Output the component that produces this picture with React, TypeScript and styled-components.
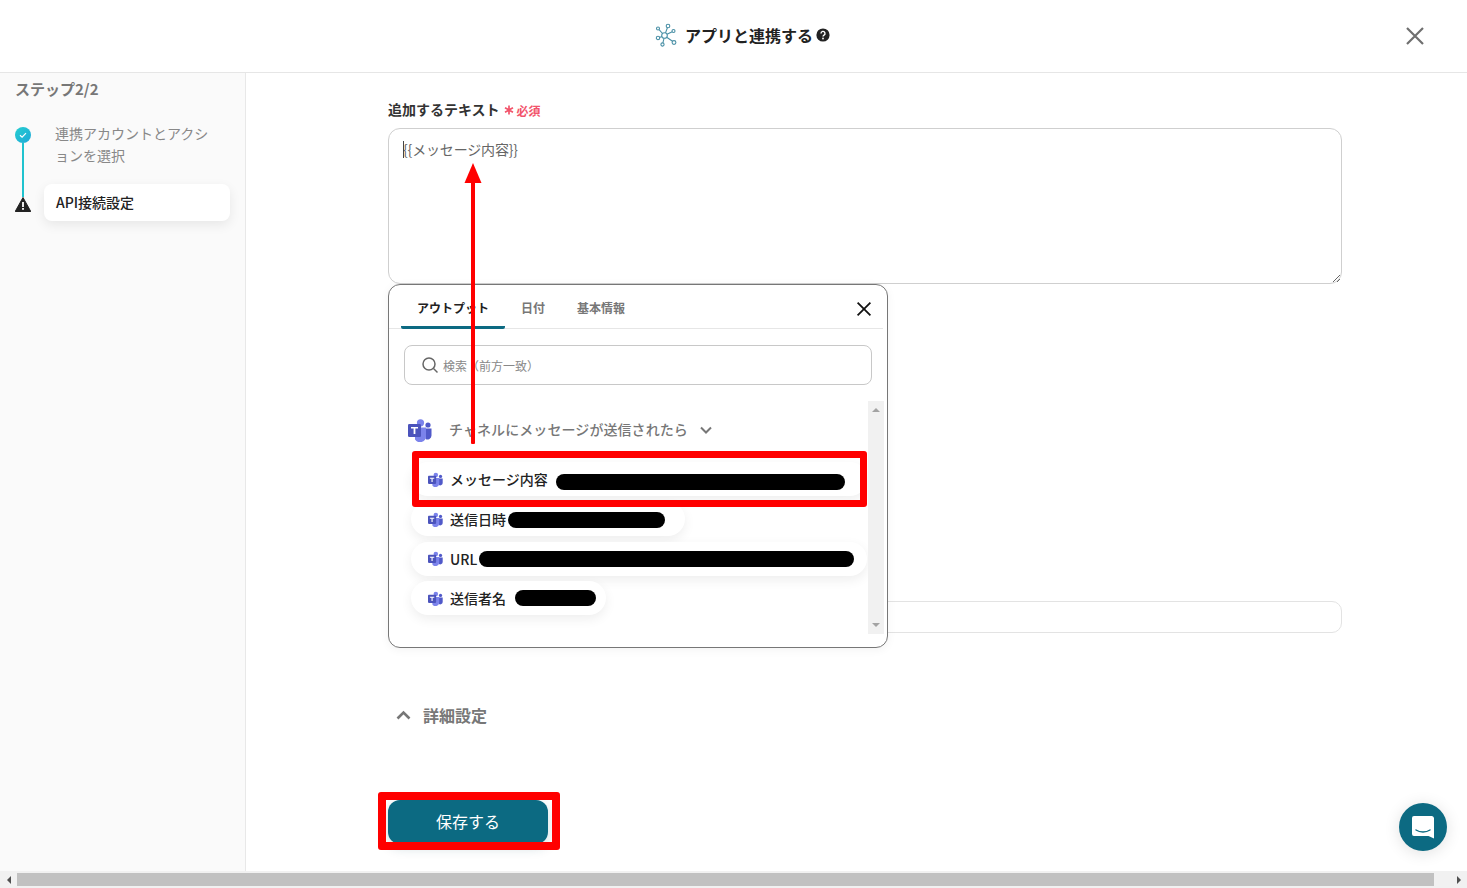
import React from "react";
import styled, { createGlobalStyle } from "styled-components";

const Global = createGlobalStyle`
  html, body { margin: 0; padding: 0; height: 100%; overflow: hidden; background: #fff; }
  body { font-family: "Noto Sans CJK JP", "Noto Sans", sans-serif; color: #222; }
  * { box-sizing: border-box; }
`;

const Page = styled.div`
  position: relative;
  width: 1467px;
  height: 888px;
  display: flex;
  flex-direction: column;
  overflow: hidden;
`;
const Header = styled.header`
  height: 73px;
  flex: none;
  display: grid;
  grid-template-columns: 1fr auto 1fr;
  align-items: center;
  border-bottom: 1px solid #e6e6e6;
  padding: 0 42px 0 60px;
`;
const Title = styled.h1`
  grid-column: 2;
  margin: -2px 0 0;
  display: flex;
  align-items: center;
  font-size: 16px;
  line-height: 24px;
  font-weight: 700;
  color: #222;
`;
const TitleText = styled.span`
  margin-left: 8px;
  margin-right: 3px;
`;
const CloseBtn = styled.div`
  grid-column: 3;
  justify-self: end;
  width: 20px;
  height: 20px;
  display: flex;
`;
const Body = styled.div`
  flex: 1;
  display: flex;
  min-height: 0;
`;
const Sidebar = styled.aside`
  width: 246px;
  flex: none;
  background: #fafafa;
  border-right: 1px solid #e8e8e8;
  padding: 6px 15px 0;
`;
const StepHead = styled.div`
  font-size: 15px;
  line-height: 20px;
  font-weight: 700;
  color: #777;
  letter-spacing: 0;
`;
const Steps = styled.div`
  display: flex;
  margin-top: 28px;
`;
const Rail = styled.div`
  width: 16px;
  flex: none;
  display: flex;
  flex-direction: column;
  align-items: center;
`;
const RailLine = styled.div`
  width: 2px;
  height: 54px;
  background: #1fc3cf;
`;
const StepList = styled.div`
  margin-left: 13px;
  width: 186px;
  display: flex;
  flex-direction: column;
  margin-top: -5px;
`;
const StepItem = styled.div<{ $active?: boolean }>`
  padding: ${(p) => (p.$active ? "7px 12px" : "0 12px 0 11px")};
  height: ${(p) => (p.$active ? "37px" : "auto")};
  margin-top: ${(p) => (p.$active ? "18px" : "0")};
  font-size: 14px;
  line-height: 22px;
  font-weight: ${(p) => (p.$active ? 500 : 400)};
  color: ${(p) => (p.$active ? "#222" : "#888")};
  background: ${(p) => (p.$active ? "#fff" : "transparent")};
  border-radius: ${(p) => (p.$active ? "8px" : "0")};
  box-shadow: ${(p) => (p.$active ? "0 4px 12px rgba(0,0,0,.08)" : "none")};
`;
const Main = styled.main`
  flex: 1;
  padding: 25px 0 0 142px;
  min-width: 0;
`;
const Column = styled.div`
  width: 954px;
  display: flex;
  flex-direction: column;
`;
const LabelRow = styled.div`
  display: flex;
  align-items: center;
  height: 22px;
  font-size: 14px;
  font-weight: 700;
  color: #333;
`;
const Required = styled.span`
  display: flex;
  align-items: center;
  margin-left: 4px;
  font-size: 12px;
  font-weight: 700;
  color: #f2546b;
  margin-top: 2px;
`;
const Asterisk = styled.span`
  width: 10px;
  height: 12px;
  margin-right: 3px;
  display: flex;
`;
const AreaWrap = styled.div`
  position: relative;
  margin-top: 8px;
  height: 156px;
`;
const TextArea = styled.textarea`
  display: block;
  width: 100%;
  height: 156px;
  resize: vertical;
  border: 1px solid #cfcfcf;
  border-radius: 12px;
  padding: 10px 14px;
  font-family: "Noto Sans CJK JP", sans-serif;
  font-size: 14px;
  line-height: 20px;
  letter-spacing: -0.16px;
  color: #666;
  background: #fff;
  outline: none;
`;
const Caret = styled.span`
  position: absolute;
  left: 15px;
  top: 13px;
  width: 1px;
  height: 17px;
  background: #444;
`;
const TextInput = styled.div`
  margin-top: 317px;
  height: 32px;
  border: 1px solid #e3e3e3;
  border-radius: 10px;
  background: #fff;
`;
const Details = styled.div`
  margin-top: 70px;
  height: 24px;
  padding-left: 8px;
  display: flex;
  align-items: center;
  gap: 12px;
  font-size: 16px;
  font-weight: 700;
  color: #777;
`;
const SaveBtn = styled.button`
  margin-top: 73px;
  width: 160px;
  height: 44px;
  padding: 0 0 2px;
  border: none;
  border-radius: 12px;
  background: #0c6a82;
  color: #fff;
  font-family: "Noto Sans CJK JP", sans-serif;
  font-size: 16px;
  box-shadow: 0 4px 12px rgba(12,70,90,.18);
`;
const HScroll = styled.div`
  height: 17px;
  flex: none;
  background: #f1f1f1;
  display: grid;
  grid-template-columns: 17px 1fr 33px;
  align-items: center;
`;
const HThumb = styled.div`
  height: 13px;
  background: #c1c1c1;
`;
const ArrowBox = styled.div<{ $pad?: number }>`
  display: flex;
  justify-content: center;
  align-items: center;
  padding-left: ${(p) => p.$pad || 0}px;
`;
const Tri = styled.span<{ $dir: "l" | "r" | "u" | "d"; $c?: string }>`
  width: 0;
  height: 0;
  border-style: solid;
  border-color: transparent;
  ${(p) =>
    p.$dir === "l"
      ? `border-width:4px 4px 4px 0;border-right-color:${p.$c || "#505050"};`
      : p.$dir === "r"
      ? `border-width:4px 0 4px 4px;border-left-color:${p.$c || "#505050"};`
      : p.$dir === "u"
      ? `border-width:0 4px 4px 4px;border-bottom-color:${p.$c || "#a3a3a3"};`
      : `border-width:4px 4px 0 4px;border-top-color:${p.$c || "#a3a3a3"};`}
`;
const Popup = styled.div`
  position: absolute;
  left: 388px;
  top: 284px;
  width: 500px;
  height: 364px;
  background: #fff;
  border: 1px solid #777;
  border-radius: 12px;
  box-shadow: 0 2px 10px rgba(0,0,0,.05);
  display: flex;
  flex-direction: column;
`;
const TabBar = styled.div`
  height: 44px;
  flex: none;
  margin: 0 4px 0 0;
  padding: 0 11px 0 12px;
  border-bottom: 1px solid #e6e6e6;
  display: flex;
  align-items: stretch;
  justify-content: space-between;
`;
const Tabs = styled.div`
  display: flex;
`;
const Tab = styled.div<{ $active?: boolean; $w: number }>`
  width: ${(p) => p.$w}px;
  text-align: center;
  font-size: 12px;
  line-height: 46px;
  height: 44px;
  font-weight: 700;
  color: ${(p) => (p.$active ? "#222" : "#777")};
  border-bottom: ${(p) => (p.$active ? "3px solid #0c6a82" : "none")};
  border-radius: ${(p) => (p.$active ? "2px" : "0")};
`;
const PopupClose = styled.div`
  display: flex;
  align-items: center;
  padding-top: 4px;
`;
const SearchBox = styled.div`
  margin: 16px 15px 0;
  height: 40px;
  flex: none;
  border: 1px solid #c8c8c8;
  border-radius: 8px;
  display: flex;
  align-items: center;
  padding-left: 16px;
  gap: 4px;
  font-size: 12px;
  color: #888;
`;
const ListArea = styled.div`
  margin-top: 16px;
  height: 233px;
  flex: none;
  display: flex;
`;
const List = styled.div`
  flex: 1;
  min-width: 0;
  padding: 17px 0 0 19px;
`;
const GroupRow = styled.div`
  display: flex;
  align-items: center;
  height: 24px;
  font-size: 14px;
  color: #777;
  font-weight: 500;
`;
const GroupText = styled.span`
  margin: -2px 12px 0 17px;
  letter-spacing: 0.08px;
`;
const Items = styled.div`
  margin: 20px 0 0 3px;
  display: flex;
  flex-direction: column;
  align-items: flex-start;
  gap: 5.600px;
`;
const Item = styled.div<{ $w: number }>`
  width: ${(p) => p.$w}px;
  height: 34px;
  border-radius: 17px;
  background: #fff;
  box-shadow: 0 4px 12px rgba(0,0,0,.07);
  display: flex;
  align-items: center;
  padding-left: 17px;
  font-size: 14px;
  font-weight: 500;
  color: #222;
  flex: none;
  &:first-child { margin-bottom: 0.5px; }
`;
const ItemLabel = styled.span`
  margin-left: 7px;
`;
const Redact = styled.span<{ $w: number; $ml: number; $mt: number }>`
  display: block;
  width: ${(p) => p.$w}px;
  height: 16px;
  margin-left: ${(p) => p.$ml}px;
  margin-top: ${(p) => p.$mt}px;
  background: #000;
  border-radius: 8px;
`;
const VScroll = styled.div`
  width: 16px;
  flex: none;
  margin-right: 3px;
  background: #f1f1f1;
  display: flex;
  flex-direction: column;
  justify-content: space-between;
  align-items: center;
  padding: 7px 0;
`;
const RedBox = styled.div<{ $l: number; $t: number; $w: number; $h: number; $b: number }>`
  position: absolute;
  left: ${(p) => p.$l}px;
  top: ${(p) => p.$t}px;
  width: ${(p) => p.$w}px;
  height: ${(p) => p.$h}px;
  border: ${(p) => p.$b}px solid #f00;
  border-radius: 3px;
`;
const ArrowSvg = styled.svg`
  position: absolute;
  left: 464px;
  top: 162px;
`;
const ChatBubble = styled.div`
  position: absolute;
  left: 1399px;
  top: 803px;
  width: 48px;
  height: 48px;
  border-radius: 50%;
  background: #0c6a82;
  box-shadow: 0 2px 16px rgba(0,0,0,.12);
  display: flex;
  align-items: center;
  justify-content: center;
`;

const Teams = ({ size }: { size: number }) => (
  <svg width={size} height={size} viewBox="0 0 24 24" style={{ flex: "none" }}>
    <circle cx="20" cy="7" r="2.6" fill="#5059c9" />
    <path d="M15.5 10.5h8v7a4 4 0 0 1-6 3.4V12a1.500 1.500 0 0 0-2-1.500z" fill="#5059c9" />
    <circle cx="12.5" cy="4.8" r="3.6" fill="#7b83eb" />
    <path d="M7 9.500h11v9a6 6 0 0 1-11 3z" fill="#7b83eb" />
    <rect x="0" y="6" width="13" height="13" rx="1.3" fill="#4b53bc" />
    <path d="M3 9h7v1.600H7.400V16H5.600v-5.400H3z" fill="#fff" />
  </svg>
);

const Hub = () => (
  <svg width="22" height="24" viewBox="0 0 22 24" fill="none" stroke="#4a90a6" strokeWidth="1.1">
    <circle cx="9.5" cy="12.5" r="2.8" />
    <circle cx="13" cy="3" r="1.8" />
    <circle cx="3" cy="5.5" r="1.5" />
    <circle cx="18.5" cy="8" r="1.5" />
    <circle cx="19" cy="19.5" r="1.9" />
    <circle cx="7.5" cy="21.5" r="1.6" />
    <circle cx="3" cy="15" r="1.7" />
    <path d="M10.500 9.900L12.400 4.700M7.500 10.500L4.100 6.600M12 11.300L17.200 8.700M11.700 14.300L17.500 18.300M9 15.300L7.900 19.900M6.900 13.500L4.600 14.400" />
  </svg>
);

const XIcon = ({ size, color, w }: { size: number; color: string; w: number }) => (
  <svg width={size} height={size} viewBox="0 0 20 20" stroke={color} strokeWidth={w} fill="none">
    <path d="M2 2l16 16M18 2L2 18" />
  </svg>
);

export default function App() {
  return (
    <Page>
      <Global />
      <Header>
        <Title>
          <Hub />
          <TitleText>アプリと連携する</TitleText>
          <svg width="14" height="14" viewBox="0 0 14 14">
            <circle cx="7" cy="7" r="6.6" fill="#222" />
            <path d="M5 5.400a2 2 0 1 1 3 1.700c-.7.4-1 .7-1 1.400" stroke="#fff" strokeWidth="1.4" fill="none" />
            <circle cx="7" cy="10.5" r=".9" fill="#fff" />
          </svg>
        </Title>
        <CloseBtn>
          <XIcon size={20} color="#6f6f6f" w={2.2} />
        </CloseBtn>
      </Header>
      <Body>
        <Sidebar>
          <StepHead>ステップ2/2</StepHead>
          <Steps>
            <Rail>
              <svg width="16" height="16" viewBox="0 0 16 16" style={{ flex: "none" }}>
                <defs>
                  <linearGradient id="g" x1="0" y1="0" x2="1" y2="1">
                    <stop offset="0" stopColor="#25cfd0" />
                    <stop offset="1" stopColor="#1ea7d8" />
                  </linearGradient>
                </defs>
                <circle cx="8" cy="8" r="8" fill="url(#g)" />
                <path d="M5 8.200l2.100 2L11 6.200" stroke="#fff" strokeWidth="1.2" fill="none" />
              </svg>
              <RailLine />
              <svg width="16" height="15" viewBox="0 0 16 15" style={{ flex: "none" }}>
                <path d="M8 .5L15.800 14.500H.2z" fill="#222" stroke="#222" strokeLinejoin="round" />
                <rect x="7.1" y="5" width="1.8" height="5" fill="#fff" />
                <rect x="7.1" y="11" width="1.8" height="1.8" fill="#fff" />
              </svg>
            </Rail>
            <StepList>
              <StepItem>連携アカウントとアクションを選択</StepItem>
              <StepItem $active>API接続設定</StepItem>
            </StepList>
          </Steps>
        </Sidebar>
        <Main>
          <Column>
            <LabelRow>
              追加するテキスト
              <Required>
                <Asterisk>
                  <svg width="10" height="12" viewBox="0 0 10 12" stroke="#f2546b" strokeWidth="1.7">
                    <path d="M5 1.500v9M1 3.800l8 4.400M9 3.800L1 8.200" />
                  </svg>
                </Asterisk>
                必須
              </Required>
            </LabelRow>
            <AreaWrap>
              <TextArea defaultValue="{{メッセージ内容}}" />
              <Caret />
            </AreaWrap>
            <TextInput />
            <Details>
              <svg width="15" height="10" viewBox="0 0 15 10" fill="none" stroke="#777" strokeWidth="2.6">
                <path d="M1.500 8.500l6-6 6 6" />
              </svg>
              詳細設定
            </Details>
            <SaveBtn>保存する</SaveBtn>
          </Column>
        </Main>
      </Body>
      <HScroll>
        <ArrowBox><Tri $dir="l" /></ArrowBox>
        <HThumb />
        <ArrowBox $pad={16}><Tri $dir="r" /></ArrowBox>
      </HScroll>

      <Popup>
        <TabBar>
          <Tabs>
            <Tab $active $w={104}>アウトプット</Tab>
            <Tab $w={56}>日付</Tab>
            <Tab $w={80}>基本情報</Tab>
          </Tabs>
          <PopupClose>
            <XIcon size={16} color="#111" w={2.2} />
          </PopupClose>
        </TabBar>
        <SearchBox>
          <svg width="18" height="18" viewBox="0 0 18 18" fill="none" stroke="#666" strokeWidth="1.5">
            <circle cx="8" cy="8" r="6" />
            <path d="M12.500 12.500l4 4" />
          </svg>
          検索（前方一致）
        </SearchBox>
        <ListArea>
          <List>
            <GroupRow>
              <Teams size={24} />
              <GroupText>チャネルにメッセージが送信されたら</GroupText>
              <svg width="12" height="8" viewBox="0 0 12 8" fill="none" stroke="#777" strokeWidth="2">
                <path d="M1 1.500l5 5 5-5" />
              </svg>
            </GroupRow>
            <Items>
              <Item $w={456}>
                <Teams size={15} />
                <ItemLabel>メッセージ内容</ItemLabel>
                <Redact $w={289} $ml={8} $mt={6} />
              </Item>
              <Item $w={274}>
                <Teams size={15} />
                <ItemLabel>送信日時</ItemLabel>
                <Redact $w={157} $ml={2} $mt={2} />
              </Item>
              <Item $w={456}>
                <Teams size={15} />
                <ItemLabel>URL</ItemLabel>
                <Redact $w={375} $ml={2} $mt={1} />
              </Item>
              <Item $w={195}>
                <Teams size={15} />
                <ItemLabel>送信者名</ItemLabel>
                <Redact $w={81} $ml={9} $mt={0} />
              </Item>
            </Items>
          </List>
          <VScroll>
            <Tri $dir="u" />
            <Tri $dir="d" />
          </VScroll>
        </ListArea>
      </Popup>

      <RedBox $l={412} $t={451} $w={455} $h={56} $b={7} />
      <RedBox $l={378} $t={792} $w={182} $h={58} $b={8} />
      <ArrowSvg width="18" height="283" viewBox="0 0 18 283">
        <path d="M9 1L17.500 21H.5z" fill="#f00" />
        <rect x="7" y="20" width="4" height="262" rx="1" fill="#f00" />
      </ArrowSvg>

      <ChatBubble>
        <svg width="24" height="26" viewBox="0 0 24 26">
          <path d="M3 2h18a2.500 2.500 0 0 1 2 2v20.500l-5.500-2.500H3a2 2 0 0 1-2-2V4a2 2 0 0 1 2-2z" fill="#fff" />
          <path d="M5 16c4 2.600 10 2.600 14 0" fill="none" stroke="#0c6a82" strokeWidth="1.400" strokeLinecap="round" />
        </svg>
      </ChatBubble>
    </Page>
  );
}
